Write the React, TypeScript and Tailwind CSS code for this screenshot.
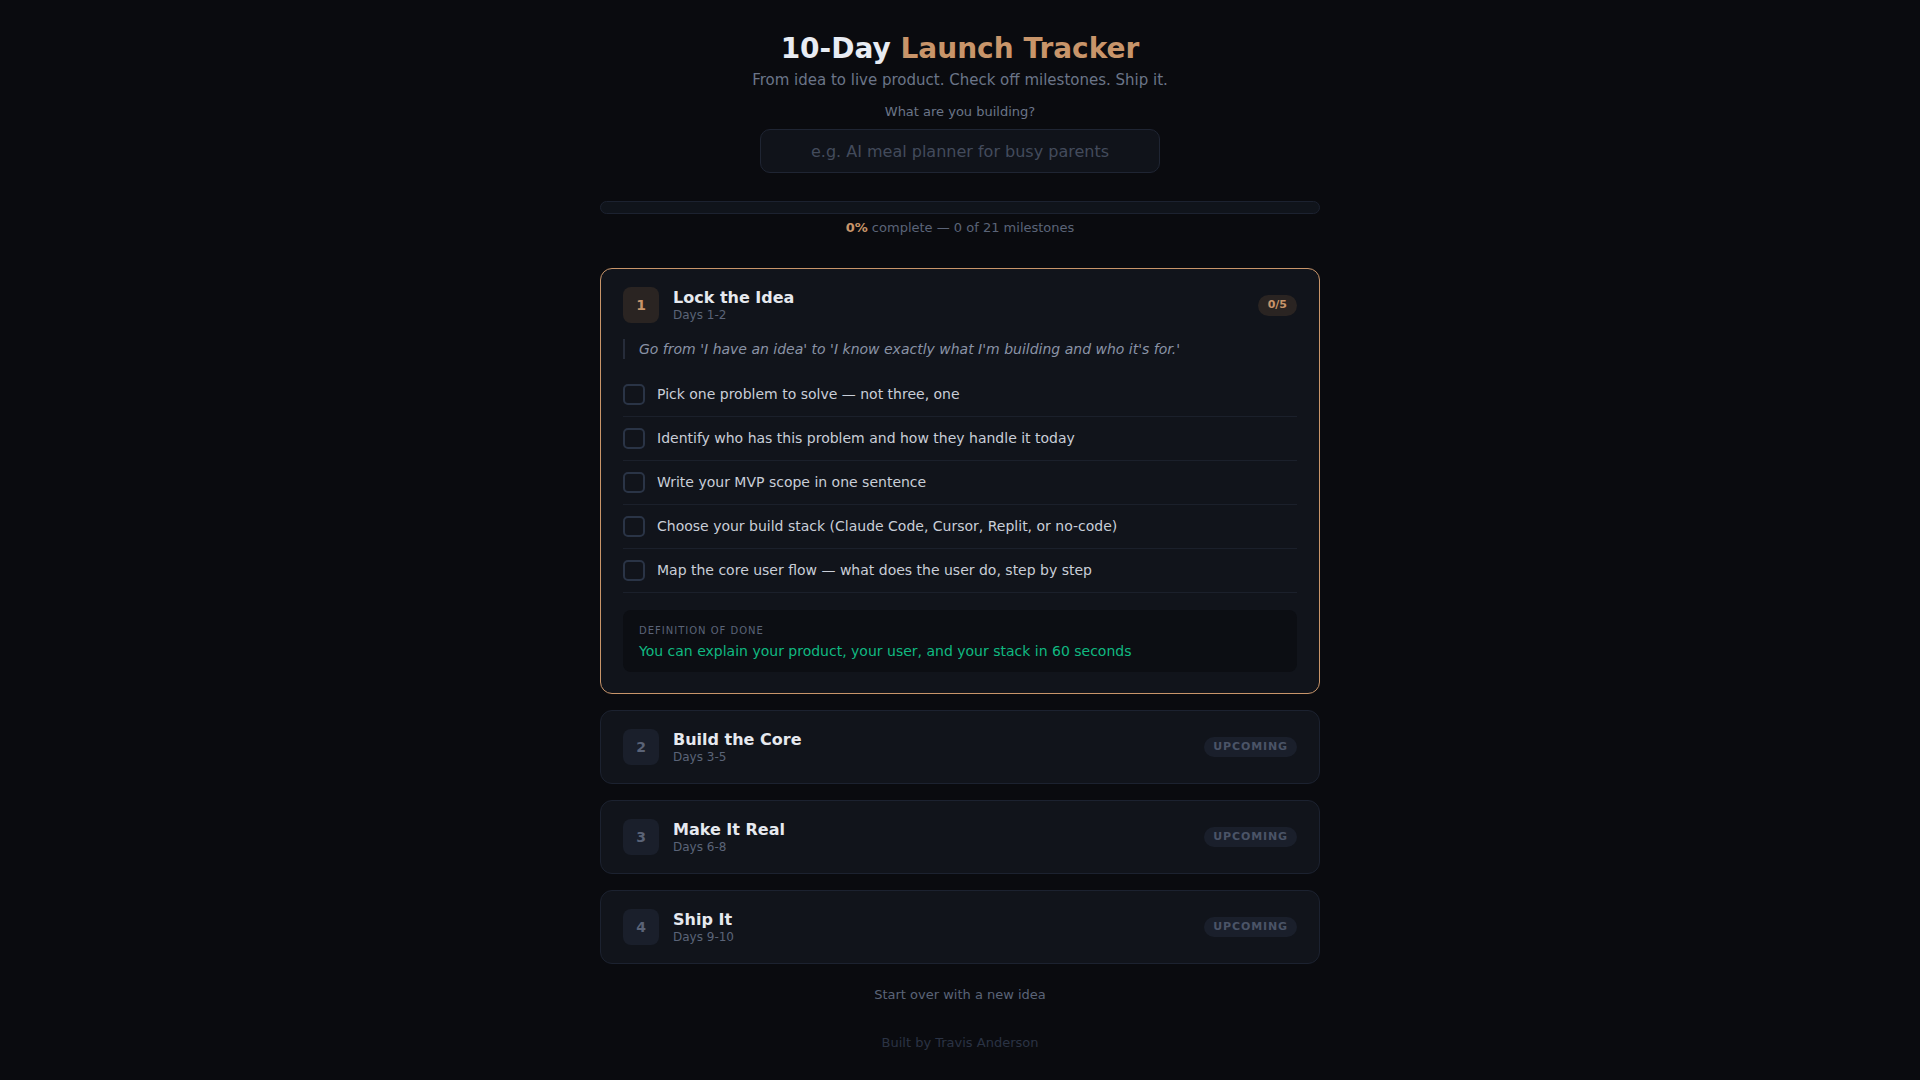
import { useState } from 'react';

type Phase = {
  id: number;
  title: string;
  days: string;
  goal?: string;
  tasks?: string[];
  done?: string;
};

const phases: Phase[] = [
  {
    id: 1,
    title: 'Lock the Idea',
    days: 'Days 1-2',
    goal: "Go from 'I have an idea' to 'I know exactly what I'm building and who it's for.'",
    tasks: [
      'Pick one problem to solve — not three, one',
      'Identify who has this problem and how they handle it today',
      'Write your MVP scope in one sentence',
      'Choose your build stack (Claude Code, Cursor, Replit, or no-code)',
      'Map the core user flow — what does the user do, step by step',
    ],
    done: 'You can explain your product, your user, and your stack in 60 seconds',
  },
  { id: 2, title: 'Build the Core', days: 'Days 3-5' },
  { id: 3, title: 'Make It Real', days: 'Days 6-8' },
  { id: 4, title: 'Ship It', days: 'Days 9-10' },
];

function PhaseHeader({ phase, active, count }: { phase: Phase; active: boolean; count?: string }) {
  return (
    <div className="flex items-center gap-3.5">
      <div
        className={
          active
            ? 'w-9 h-9 rounded-lg flex items-center justify-center text-sm font-bold bg-[#2a2422] text-[#c8956a]'
            : 'w-9 h-9 rounded-lg flex items-center justify-center text-sm font-bold bg-[#1a1f2b] text-[#5a6377]'
        }
      >
        {phase.id}
      </div>
      <div className="flex-1">
        <div className="text-base leading-[21px] font-bold text-[#e6e9ef]">{phase.title}</div>
        <div className="text-xs leading-[15px] text-[#5b6478]">{phase.days}</div>
      </div>
      {active ? (
        <span className="px-2.5 h-[21px] flex items-center rounded-full bg-[#2a2422] text-[11px] font-bold text-[#c8956a]">
          {count}
        </span>
      ) : (
        <span className="px-[9px] h-5 flex items-center rounded-full bg-[#1a1f2b] text-[11px] font-bold tracking-[0.08em] text-[#4b5467]">
          UPCOMING
        </span>
      )}
    </div>
  );
}

export default function App() {
  const [idea, setIdea] = useState('');
  const [checked, setChecked] = useState<Record<string, boolean>>({});
  const total = 21;
  const doneCount = Object.values(checked).filter(Boolean).length;
  const pct = Math.round((doneCount / total) * 100);
  const first = phases[0];
  const firstDone = (first.tasks ?? []).filter((t) => checked[t]).length;

  return (
    <div className="min-h-screen bg-[#0a0b0f] font-['DejaVu_Sans',sans-serif]">
      <div className="max-w-[720px] mx-auto pt-[32px] pb-8">
        {/* Header */}
        <div className="flex flex-col items-center text-center">
          <h1 className="text-[28px] leading-[34px] font-bold text-[#e8ecf3]">
            10-Day <span className="text-[#c8956a]">Launch Tracker</span>
          </h1>
          <p className="mt-[3px] text-[15px] leading-[22px] text-[#6b7588]">
            From idea to live product. Check off milestones. Ship it.
          </p>
          <label className="mt-3 text-[13px] leading-[18px] text-[#6b7588]">What are you building?</label>
          <input
            value={idea}
            onChange={(e) => setIdea(e.target.value)}
            placeholder="e.g. AI meal planner for busy parents"
            className="mt-2 w-[400px] h-11 rounded-[10px] bg-[#10131a] border border-[#1f2533] text-center text-base text-[#d5dae3] placeholder:text-[#434b5c] outline-none"
          />
        </div>

        {/* Progress */}
        <div className="mt-7 h-[13px] rounded-full bg-[#10141b] border border-[#1c2230] overflow-hidden">
          <div className="h-full bg-[#c8956a]" style={{ width: `${pct}%` }} />
        </div>
        <div className="mt-[5px] text-center text-[13px] leading-[18px] text-[#5b6478]">
          <span className="font-bold text-[#c8956a]">{pct}%</span> complete — {doneCount} of {total} milestones
        </div>

        {/* Phases */}
        <div className="mt-[31px] flex flex-col gap-4">
          <div className="rounded-xl border border-[#c8956a] bg-[#11141b] px-[22px] pt-[18px] pb-[21px]">
            <PhaseHeader phase={first} active count={`${firstDone}/5`} />
            <div className="mt-4 border-l-2 border-[#262c3a] pl-3.5 text-sm leading-5 italic text-[#8a93a6]">
              {first.goal}
            </div>
            <div className="mt-[14px]">
              {first.tasks?.map((t) => (
                <div
                  key={t}
                  onClick={() => setChecked((c) => ({ ...c, [t]: !c[t] }))}
                  className="flex items-center gap-3 py-[11px] border-b border-[#1b202b] cursor-pointer"
                >
                  <div
                    className={
                      checked[t]
                        ? 'w-[22px] h-[21px] rounded-[5px] border-2 border-[#c8956a] bg-[#c8956a]'
                        : 'w-[22px] h-[21px] rounded-[5px] border-2 border-[#2a3446]'
                    }
                  />
                  <span className="text-sm leading-[21px] text-[#c9ced8]">{t}</span>
                </div>
              ))}
            </div>
            <div className="mt-[17px] rounded-lg bg-[#0c0e13] px-4 pt-[14px] pb-[11px]">
              <div className="text-[10px] leading-[14px] tracking-[0.1em] text-[#5b6478]">DEFINITION OF DONE</div>
              <div className="mt-[3px] text-sm leading-5 text-[#10b981]">{first.done}</div>
            </div>
          </div>

          {phases.slice(1).map((p) => (
            <div key={p.id} className="rounded-xl border border-[#1c2230] bg-[#11141b] px-[22px] py-[18px]">
              <PhaseHeader phase={p} active={false} />
            </div>
          ))}
        </div>

        {/* Footer */}
        <div className="mt-[22px] text-center text-[13px] leading-[18px] text-[#5b6478]">
          <button onClick={() => { setChecked({}); setIdea(''); }}>Start over with a new idea</button>
        </div>
        <div className="mt-[30px] text-center text-[13px] leading-[18px] text-[#2b3344]">Built by Travis Anderson</div>
      </div>
    </div>
  );
}
